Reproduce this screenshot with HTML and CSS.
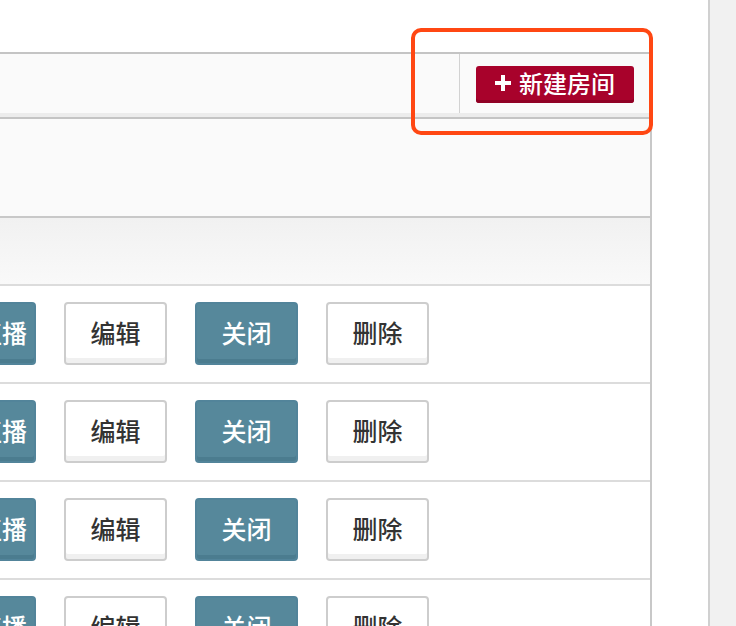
FILE: index.html
```html
<!DOCTYPE html>
<html lang="zh-CN">
<head>
    <meta charset="UTF-8">
    <meta name="viewport" content="width=device-width, initial-scale=1.0">
    <title>房间管理</title>
    <link rel="stylesheet" href="styles.css">
</head>
<body>
    <div class="main">
        <div class="panel">
            <div class="toolbar">
                <div class="tool-cell">
                    <button class="btn btn-red">
                        <svg class="plus" width="16" height="16" viewBox="0 0 16 16"><path d="M6 0h4v6h6v4h-6v6h-4v-6h-6v-4h6z" fill="#fff"/></svg>
                        新建房间
                    </button>
                </div>
            </div>
            <div class="filter"></div>
            <div class="thead"></div>
            <div class="row">
                <button class="btn btn-blue btn-first">开始直播</button>
                <button class="btn">编辑</button>
                <button class="btn btn-blue">关闭</button>
                <button class="btn">删除</button>
            </div>
            <div class="row">
                <button class="btn btn-blue btn-first">开始直播</button>
                <button class="btn">编辑</button>
                <button class="btn btn-blue">关闭</button>
                <button class="btn">删除</button>
            </div>
            <div class="row">
                <button class="btn btn-blue btn-first">开始直播</button>
                <button class="btn">编辑</button>
                <button class="btn btn-blue">关闭</button>
                <button class="btn">删除</button>
            </div>
            <div class="row">
                <button class="btn btn-blue btn-first">开始直播</button>
                <button class="btn">编辑</button>
                <button class="btn btn-blue">关闭</button>
                <button class="btn">删除</button>
            </div>
        </div>
        <div class="highlight"></div>
    </div>
    <div class="sidebar"></div>
</body>
</html>
```

FILE: styles.css
```css
body {
    font-family: "Noto Sans CJK SC", sans-serif;
    background-color: #fff;
    color: #333;
    margin: 0;
    padding: 0;
    height: 626px;
    overflow: hidden;
    display: flex;
}
.main {
    position: relative;
    width: 708px;
    flex: none;
}
.panel {
    width: 650px;
    margin-top: 52px;
    border-top: 2px solid #c4c4c4;
    border-right: 2px solid #c8c8c8;
    overflow: hidden;
}
.toolbar {
    height: 63px;
    background-color: #fafafa;
    box-shadow: inset 0 -4px 0 #ececec;
    border-bottom: 2px solid #c4c4c4;
    display: flex;
    justify-content: flex-end;
}
.tool-cell {
    border-left: 1px solid #d2d2d2;
    padding: 12px 16px 0 16px;
    margin-bottom: 4px;
}
.filter {
    height: 97px;
    background-color: #fafafa;
    border-bottom: 2px solid #c8c8c8;
}
.thead {
    height: 66px;
    background: linear-gradient(#f1f1f1, #f9f9f9);
    border-bottom: 2px solid #dcdcdc;
}
.row {
    height: 98px;
    border-bottom: 2px solid #dcdcdc;
    background-color: #fff;
    display: flex;
    align-items: flex-start;
    gap: 28px;
    padding-top: 16px;
    box-sizing: border-box;
    margin-left: -74px;
}
.btn {
    font-family: inherit;
    font-size: 25px;
    font-weight: 500;
    color: #333;
    width: 103px;
    height: 63px;
    padding: 0;
    margin: 0;
    flex: none;
    background-color: #fff;
    border: 2px solid #cdcdcd;
    border-radius: 4px;
    box-shadow: inset 0 -5px 0 #f0f0f0;
    display: flex;
    align-items: center;
    justify-content: center;
    line-height: 1;
    padding-bottom: 2px;
    white-space: nowrap;
}
.btn-blue {
    background-color: #56889b;
    border-color: #52849a;
    box-shadow: inset 0 -4px 0 #4b7c8f;
    color: #fff;
}
.btn-first {
    width: 110px;
    justify-content: flex-end;
    padding: 0 7px 2px 0;
}
.btn-red {
    width: 158px;
    height: 37px;
    background-color: #a8022b;
    border: none;
    border-radius: 3px;
    box-shadow: inset 0 -3px 0 #8f0024;
    color: #fff;
    font-size: 24px;
    gap: 8px;
    padding-bottom: 3px;
}
.plus {
    flex: none;
}
.highlight {
    position: absolute;
    left: 411px;
    top: 28px;
    width: 242px;
    height: 107px;
    box-sizing: border-box;
    border: 4px solid #ff4713;
    border-radius: 10px;
}
.sidebar {
    flex: 1;
    border-left: 2px solid #d0d0d0;
    background-color: #f1f1f1;
}
```
